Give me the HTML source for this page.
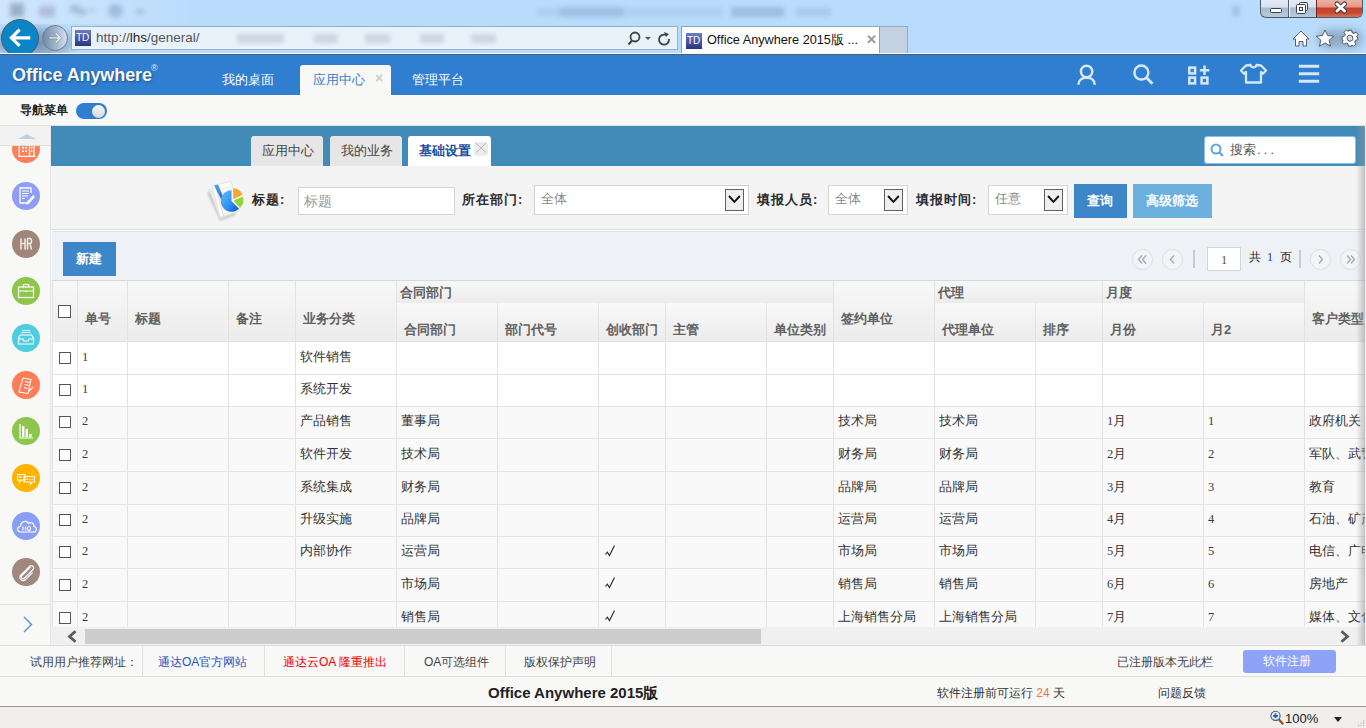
<!DOCTYPE html>
<html><head><meta charset="utf-8">
<style>
*{margin:0;padding:0;box-sizing:border-box;}
html,body{width:1366px;height:728px;overflow:hidden;font-family:"Liberation Sans",sans-serif;font-size:13px;color:#333;background:#f0edeb;position:relative;}
div,span{position:absolute;}
.t{white-space:nowrap;line-height:1;}
/* browser chrome */
#chrome{left:0;top:0;width:1366px;height:54px;background:#b9dbfc;overflow:hidden;border-bottom:1px solid #f4f8fc;}
#hdr{left:0;top:54px;width:1366px;height:41px;background:#2f7ecf;border-top:1px solid #535b64;}
#subbar{left:0;top:95px;width:1366px;height:31px;background:#f8f8f6;border-bottom:1px solid #e2e2e2;}
#side{left:0;top:126px;width:51px;height:519px;background:#f8f8f6;border-right:1px solid #e6e6e6;overflow:hidden;}
#main{left:51px;top:126px;width:1315px;height:519px;background:#f4f4f4;overflow:hidden;}
#topbar{left:0;top:0;width:1315px;height:40px;background:#428bb9;}
#filter{left:0;top:40px;width:1315px;height:64px;background:#f4f4f4;border-bottom:1px solid #dcdcdc;}
#toolbar{left:0;top:104px;width:1315px;height:50px;background:#eef1f6;border-top:1px solid #fff;border-left:1px solid #fff;box-shadow:inset 0 1px 0 #e3e3e3;}
#foot1{left:0;top:645px;width:1366px;height:32px;background:#f8f8f6;border-top:1px solid #dcdcdc;}
#foot2{left:0;top:676px;width:1366px;height:31px;background:#f8f8f6;border-top:1px solid #dcdcdc;border-bottom:1px solid #9a9a9a;}
#status{left:0;top:707px;width:1366px;height:21px;background:#f0edeb;}
.hicon{top:62px;width:26px;height:26px;}
.sico{left:12px;width:28px;height:28px;border-radius:50%;}
.ptab{top:10px;height:30px;background:#e6e6e6;border-radius:3px 3px 0 0;color:#444;font-size:13px;}
.lbl{font-weight:bold;font-size:13px;color:#2a2a2a;letter-spacing:1px;}
.inp{background:#fff;border:1px solid #d3d3d3;}
.sel{background:#fff;border:1px solid #d3d3d3;}
.dd{top:3px;width:19px;height:22px;border:1px solid #606060;background:#efefef;}
.btn{color:#fff;font-weight:bold;font-size:13px;text-align:center;}
.pc{top:247px;width:22px;height:22px;border-radius:50%;border:1px solid #d8dce2;color:#aaa;font-size:13px;text-align:center;line-height:19px;}
/* table */
#tbl{left:0;top:0;}
.th2{font-weight:bold;color:#606060;font-size:13px;}
.th{background:linear-gradient(#f7f7f7,#eaeaea);border-right:1px solid #dedede;border-bottom:1px solid #dedede;font-weight:bold;color:#555;font-size:13px;}
.vl{top:0;width:1px;background:#e2e2e2;}
.hl{left:0;height:1px;background:#e2e2e2;}
.cell{font-size:12.5px;color:#333;}
.dg{position:static;font-family:"Liberation Serif",serif;font-size:12.5px;color:#3a3a3a;}
.cb{width:12px;height:12px;border:1px solid #555;background:#fff;}
.ft{font-size:13px;color:#444;top:655px;}
.fsep{top:646px;width:1px;height:31px;background:#e0e0e0;}
</style></head>
<body>
<!-- ===== Browser chrome ===== -->
<div id="chrome">
  <div style="left:0;top:0;width:200px;height:24px;background:linear-gradient(90deg,rgba(255,255,255,.3),rgba(255,255,255,.18) 50%,rgba(255,255,255,0));"></div>
  <div style="left:8px;top:2px;width:150px;height:18px;filter:blur(2.6px);opacity:.42">
    <div style="left:2px;top:1px;width:14px;height:14px;background:#5a6a80;"></div>
    <div style="left:31px;top:4px;width:16px;height:11px;background:#8a86b8;"></div>
    <div style="left:61px;top:3px;width:12px;height:8px;border-radius:50%;background:#6a88aa;"></div>
    <div style="left:70px;top:7px;width:8px;height:6px;background:#6a88aa;"></div>
    <div style="left:80px;top:7px;width:8px;height:3px;background:#8aa0bb;"></div>
    <div style="left:100px;top:2px;width:15px;height:14px;border-radius:50%;background:#6a8db5;"></div>
    <div style="left:128px;top:7px;width:8px;height:5px;background:#7a98b8;"></div>
  </div>

  <div style="left:535px;top:6px;width:300px;height:12px;filter:blur(2.2px);">
    <div style="left:2px;top:2px;width:23px;height:8px;background:rgba(90,120,160,.12);"></div>
    <div style="left:25px;top:1px;width:64px;height:10px;background:rgba(70,100,140,.22);"></div>
    <div style="left:90px;top:2px;width:97px;height:8px;background:rgba(90,120,160,.13);"></div>
    <div style="left:196px;top:1px;width:53px;height:10px;background:rgba(70,100,140,.24);"></div>
    <div style="left:261px;top:2px;width:35px;height:8px;background:rgba(80,110,150,.16);"></div>
  </div>

  <div style="left:1232px;top:5px;width:8px;height:12px;border-radius:50%;background:rgba(90,120,160,.25);filter:blur(2px);"></div>
  <!-- window buttons -->
  <div style="left:1260px;top:-1px;width:103px;height:19px;border:1px solid #505a66;border-top:none;border-radius:0 0 6px 6px;overflow:hidden;background:linear-gradient(#e4edf7 0,#d6e2ee 8px,#a9bbd1 9px,#b9c9dc 100%);">
    <div style="left:27px;top:0;width:1px;height:19px;background:#56606c;"></div>
    <div style="left:28px;top:0;width:1px;height:19px;background:#f0f4f8;"></div>
    <div style="left:55px;top:0;width:48px;height:19px;background:linear-gradient(#f0b4a8 0,#e39888 8px,#c54128 9px,#c94a30 14px,#d9806a 100%);border-left:1px solid #6a2a1a;"></div>
    <svg style="position:absolute;left:0;top:0" width="103" height="19" viewBox="0 0 103 19">
      <rect x="9.5" y="9.5" width="11" height="4" rx="1" fill="#fff" stroke="#3a3f48" stroke-width="1"/>
      <rect x="38.5" y="3.5" width="8" height="8" rx="1" fill="#f4f4f4" stroke="#3a3f48" stroke-width="1"/>
      <rect x="35.5" y="5.5" width="9" height="9" rx="1" fill="#f8f8f8" stroke="#3a3f48" stroke-width="1"/>
      <rect x="38.5" y="8.5" width="3" height="3" fill="none" stroke="#3a3f48" stroke-width="1"/>
      <path d="M76 5 L83.5 12 M83.5 5 L76 12" stroke="#3a3f48" stroke-width="5" stroke-linecap="round"/>
      <path d="M76 5 L83.5 12 M83.5 5 L76 12" stroke="#fff" stroke-width="3" stroke-linecap="round"/>
    </svg>
  </div>
  <!-- back / forward -->
  <div style="left:-10px;top:24px;width:92px;height:34px;border-radius:50%;background:radial-gradient(ellipse at 45% 55%,rgba(50,70,100,.55),rgba(50,70,100,.25) 50%,rgba(50,70,100,0) 72%);filter:blur(2px);"></div>
  <div style="left:1px;top:19px;width:38px;height:38px;border-radius:50%;background:#0a86c8;border:1px solid #4a5a6a;"></div>
  <svg style="position:absolute;left:8px;top:27px" width="24" height="21" viewBox="0 0 24 21"><path d="M1.2 10.8 L10.5 1.5 L12.8 3.8 L7.4 9.2 H22.3 V12.4 H7.4 L12.8 17.8 L10.5 20.1 Z" fill="#fff"/></svg>
  <div style="left:42px;top:25px;width:26px;height:26px;border-radius:50%;background:linear-gradient(90deg,#7389a6,#9fb3ca 50%,#d0e2f3);border:1px solid #6e7e92;"></div>
  <svg style="position:absolute;left:47px;top:30px" width="17" height="16" viewBox="0 0 17 16"><path d="M2 6.8 H10.5 L7.6 3.9 L9.2 2.3 L14.8 7.9 L9.2 13.5 L7.6 11.9 L10.5 9 H2 Z" fill="#e2e8ef" stroke="#6e7c8c" stroke-width=".6"/></svg>
  <!-- address bar -->
  <div style="left:71px;top:26px;width:607px;height:24px;background:#e8f2fb;border:1px solid #9aaec4;">
    <div style="left:3px;top:3px;width:16px;height:16px;background:linear-gradient(#6e7bc6,#2a3582);"><div class="t" style="left:1px;top:3px;color:#fff;font-size:10px;">TD</div></div>
    <div class="t" style="left:24px;top:4px;font-size:13.5px;color:#555;">http://<span style="position:static;color:#222">lhs</span>/general/</div>
    <div style="left:165px;top:5px;width:380px;height:12px;filter:blur(2px);opacity:.16">
      <div style="left:0;top:2px;width:47px;height:9px;background:#446;"></div>
      <div style="left:77px;top:2px;width:24px;height:9px;background:#446;"></div>
      <div style="left:128px;top:2px;width:25px;height:9px;background:#446;"></div>
      <div style="left:183px;top:2px;width:24px;height:9px;background:#446;"></div>
      <div style="left:234px;top:2px;width:25px;height:9px;background:#446;"></div>
    </div>
    <svg style="position:absolute;left:555px;top:4px" width="48" height="16" viewBox="0 0 48 16"><circle cx="8" cy="6" r="4.5" stroke="#444" stroke-width="1.8" fill="none"/><path d="M5 9.5 L1.5 13.5" stroke="#444" stroke-width="2"/><path d="M18 6 L24 6 L21 9Z" fill="#555"/><path d="M39 4 A5 5 0 1 0 42 8" stroke="#444" stroke-width="1.8" fill="none"/><path d="M37 1 L42 3 L39 6Z" fill="#444"/></svg>
  </div>
  <!-- tab -->
  <div style="left:681px;top:26px;width:199px;height:28px;background:#fff;border:1px solid #8ea5be;border-bottom:none;">
    <div style="left:4px;top:6px;width:16px;height:16px;background:linear-gradient(#6e7bc6,#2a3582);"><div class="t" style="left:1px;top:3px;color:#fff;font-size:10px;">TD</div></div>
    <div class="t" style="left:25px;top:7px;font-size:12.7px;color:#111;">Office Anywhere 2015版 ...</div>
    <div class="t" style="left:184px;top:6px;font-size:13px;color:#999;font-weight:bold;">✕</div>
  </div>
  <div style="left:880px;top:26px;width:28px;height:28px;background:#c3d1e0;border:1px solid #98aac0;border-bottom:none;border-left:none;"></div>
  <!-- right icons -->
  <div style="left:1318px;top:30px;width:44px;height:18px;border-radius:9px;background:rgba(60,80,100,.35);filter:blur(4px);"></div>
  <svg style="position:absolute;left:1290px;top:28px" width="72" height="20" viewBox="0 0 72 20">
    <path d="M11 3 L19 11 H16.5 V18 H13 V13.5 H9 V18 H5.5 V11 H3 Z" fill="#fff" stroke="#4a4f58" stroke-width="0.9" stroke-linejoin="round"/>
    <path d="M35 2 L37.6 7.6 L43.8 8.2 L39.1 12.2 L40.6 18.2 L35 15 L29.4 18.2 L30.9 12.2 L26.2 8.2 L32.4 7.6Z" fill="#fff" stroke="#4a4f58" stroke-width="0.9" stroke-linejoin="round"/>
    <g transform="translate(60,10)"><path d="M-1.5 -8 H1.5 L2 -5.5 L4 -4.6 L6 -6.2 L8.1 -4.1 L6.5 -2 L7.3 0 L-0 0 Z" fill="none"/></g>
    <g transform="translate(60,10.2)" fill="#fff" stroke="#4a4f58" stroke-width="0.9" stroke-linejoin="round">
      <path d="M-1.6 -7.8 H1.6 L2.1 -5.6 L3.9 -4.8 L5.8 -6 L8 -3.8 L6.8 -1.9 L7.6 -0.1 L7.8 0 V0"/>
    </g>
    <g transform="translate(60,10.2)">
      <path d="M-1.6,-7.9 L1.6,-7.9 L2.1,-5.5 L3.9,-4.7 L5.9,-6 L8.1,-3.8 L6.8,-1.8 L7.6,0 L7.9,1.6 L5.5,2.1 L4.7,3.9 L6,5.9 L3.8,8.1 L1.8,6.8 L1.6,7.9 L-1.6,7.9 L-2.1,5.5 L-3.9,4.7 L-5.9,6 L-8.1,3.8 L-6.8,1.8 L-7.9,1.6 L-7.9,-1.6 L-5.5,-2.1 L-4.7,-3.9 L-6,-5.9 L-3.8,-8.1 L-1.8,-6.8 Z" fill="#fff" stroke="#4a4f58" stroke-width="0.9" stroke-linejoin="round"/>
      <circle r="3" fill="#c8dcf0" stroke="#4a4f58" stroke-width="0.9"/>
    </g>
  </svg>
</div>

<!-- ===== App header ===== -->
<div id="hdr">
  <div class="t" style="left:12px;top:11px;color:#f6f6f6;font-weight:bold;font-size:18px;letter-spacing:-0.1px;text-shadow:1px 1px 2px rgba(0,0,0,.35);">Office Anywhere</div>
  <div class="t" style="left:151px;top:9px;color:#e8eef6;font-size:9px;">®</div>
  <div class="t" style="left:222px;top:18px;color:#fff;font-size:13px;">我的桌面</div>
  <div style="left:300px;top:10px;width:91px;height:31px;background:#f8f8f6;border-radius:3px 3px 0 0;">
    <div class="t" style="left:13px;top:8px;color:#3a80d0;font-size:13px;">应用中心</div>
    <div class="t" style="left:75px;top:6px;color:#ccc;font-size:14px;font-weight:bold;">×</div>
  </div>
  <div class="t" style="left:412px;top:18px;color:#fff;font-size:13px;">管理平台</div>
  <svg style="position:absolute;left:1060px;top:0px" width="280" height="40" viewBox="0 0 280 40">
    <g stroke="#d4e8fa" stroke-width="2.5" fill="none">
      <circle cx="26.6" cy="16.5" r="5.7"/><path d="M18.4 29.8 C18.4 25.5 21.5 22.8 26.6 22.8 C31.7 22.8 34.8 25.5 34.8 29.8"/>
      <circle cx="81.4" cy="17.6" r="7"/><path d="M86.3 22.6 L92.5 28.8" stroke-width="2.8"/>
      <rect x="129.3" y="12.6" width="5.8" height="5.8"/><rect x="129.3" y="22.6" width="5.8" height="5.8"/><rect x="141.6" y="22.6" width="5.8" height="5.8"/><path d="M144.5 10.5 V20 M139.8 15.3 H149.3"/>
      <path d="M186 10.5 L190.5 10 C191.5 13.2 195.5 13.2 196.5 10 L201 10.5 L206 15.5 L203 18.7 L201 17 V27.5 H186 V17 L184 18.7 L181 15.5 Z" stroke-linejoin="round" stroke-width="2.3"/>
      <path d="M238.8 11.3 H259.2 M238.8 18.8 H259.2 M238.8 26.2 H259.2" stroke-width="3"/>
    </g>
  </svg>
</div>

<!-- ===== Sub bar ===== -->
<div id="subbar">
  <div class="t" style="left:20px;top:9px;font-size:12px;color:#222;font-weight:bold;">导航菜单</div>
  <div style="left:76px;top:8px;width:31px;height:16px;border-radius:8px;background:#2f7ecf;">
    <div style="left:16px;top:1.5px;width:13px;height:13px;border-radius:50%;background:linear-gradient(#fafafa,#d6d6d6);"></div>
  </div>
</div>

<!-- ===== Sidebar ===== -->
<div id="side">
  <div class="sico" style="top:9px;background:#ff7f56;"><svg width="28" height="28" viewBox="0 0 28 28"><path d="M7.2 3 V21.4 M22 3 V21.4 M17.5 3 V21.4 M6.2 21.4 H23.3" stroke="#fff" stroke-width="1.3" fill="none"/><g fill="#fff"><rect x="10" y="11.8" width="1.9" height="1.8"/><rect x="13" y="11.8" width="1.9" height="1.8"/><rect x="10" y="15.2" width="1.9" height="1.8"/><rect x="13" y="15.2" width="1.9" height="1.8"/><rect x="19" y="11.8" width="1.4" height="1.8"/><rect x="19" y="15.2" width="1.4" height="1.8"/></g></svg></div>
  <div style="left:0;top:0;width:50px;height:20px;background:#f2f2f2;border-bottom:1px solid #e0e0e0;">
    <div style="left:17.5px;top:8px;width:0;height:0;border-left:9px solid transparent;border-right:9px solid transparent;border-bottom:5px solid #c3cfdc;"></div>
  </div>
  <div class="sico" style="top:56px;background:#8e9ef7;"><svg width="28" height="28" viewBox="0 0 28 28"><path d="M16 20 V21 H8 V6 H19 V11" stroke="#fff" stroke-width="1.3" fill="none"/><path d="M10 9 H17 M10 11.5 H17 M10 14 H16 M10 16.5 H13" stroke="#fff" stroke-width="1.2"/><path d="M14.5 20.5 L21 13 L23 15 L16.5 22 L14 22.5 Z" fill="#fff"/></svg></div>
  <div class="sico" style="top:104px;background:#a08679;"><svg width="28" height="28" viewBox="0 0 28 28"><path d="M9 8.5 V19.5 M9 13.5 H13 M13 8.5 V19.5 M15.5 19.5 V8.5 H18 C20 8.5 20 13.5 18 13.5 H15.5 M18 13.5 L19.5 19.5" stroke="#f2ece6" stroke-width="1.5" fill="none"/></svg></div>
  <div class="sico" style="top:151px;background:#8ec64d;"><svg width="28" height="28" viewBox="0 0 28 28"><rect x="6.5" y="10" width="15" height="10.5" stroke="#fff" stroke-width="1.2" fill="none"/><path d="M11.5 10 V7.5 H16.5 V10 M6.5 14 H21.5 M14 13.5 V15" stroke="#fff" stroke-width="1.2" fill="none"/></svg></div>
  <div class="sico" style="top:198px;background:#4ecde0;"><svg width="28" height="28" viewBox="0 0 28 28"><path d="M6.5 14 L8.5 11 H19.5 L21.5 14 V20 H6.5Z M6.5 15 H11 L12 17 H16 L17 15 H21.5 M9.5 8.5 H18.5 M10 6.5 H18" stroke="#fff" stroke-width="1.2" fill="none"/></svg></div>
  <div class="sico" style="top:245px;background:#fe7c56;"><svg width="28" height="28" viewBox="0 0 28 28"><path d="M11 7 L19 8.5 L16.5 20 M13 10.5 L17.5 11.5 M12.5 13.5 L17 14.5 M12 16.5 L15.5 17.5" stroke="#fff" stroke-width="1.1" fill="none"/><path d="M11 7 L8 17 L7 21 L16 22.5 L17 20 M21 16 L17 20" stroke="#fff" stroke-width="1.1" fill="none"/></svg></div>
  <div class="sico" style="top:291px;background:#8ec64d;"><svg width="28" height="28" viewBox="0 0 28 28"><path d="M8 7 V21 H21" stroke="#fff" stroke-width="1.2" fill="none"/><rect x="10" y="9" width="2.4" height="11" fill="#fff"/><rect x="13.6" y="12" width="2.4" height="8" fill="#fff"/><rect x="17.2" y="17" width="2.4" height="3" fill="#fff"/></svg></div>
  <div class="sico" style="top:338px;background:#ffb300;"><svg width="28" height="28" viewBox="0 0 28 28"><path d="M5.5 10.5 H13 V16 H9 L7.5 18 V16 H5.5 Z M12 12.5 H22.5 V18 H20 L18.5 20 V18 H12 Z" stroke="#fff" stroke-width="1.1" fill="none"/><path d="M14.5 15.3 H15.8 M17 15.3 H18.3 M19.5 15.3 H20.8 M7 13 H9.5" stroke="#fff" stroke-width="1.3"/></svg></div>
  <div class="sico" style="top:386px;background:#8a9ef8;"><svg width="28" height="28" viewBox="0 0 28 28"><path d="M8.5 20 C4.5 20 4.5 14.5 8.5 14.5 C8.5 9 15 8 16.5 11.5 C19 9.5 22.5 11 22 14.5 C25.5 15 25 20 21.5 20 Z" stroke="#fff" stroke-width="1.2" fill="none"/><path d="M11 14.5 V18.5 M13.5 14.5 V18.5" stroke="#fff" stroke-width="1.1"/><ellipse cx="17" cy="16.5" rx="1.6" ry="2" stroke="#fff" stroke-width="1.1" fill="none"/></svg></div>
  <div class="sico" style="top:432px;background:#a1887f;"><svg width="28" height="28" viewBox="0 0 28 28"><path d="M18.5 9 L10 17.5 C8 19.5 10.5 22 12.5 20 L21 11.5 C23 9.5 20 6 17.5 8.5 L9 17 C6 20 10 25 13.5 21.5 L20.5 14.5" stroke="#fff" stroke-width="1.1" fill="none"/></svg></div>
  <div style="left:0;top:478px;width:50px;height:1px;background:#e3e3e3;"></div>
  <svg style="position:absolute;left:22px;top:490px" width="12" height="17" viewBox="0 0 12 17"><path d="M2 1 L9.5 8.5 L2 16" stroke="#4a95e0" stroke-width="1.4" fill="none"/></svg>
</div>

<!-- ===== Main ===== -->
<div id="main">
  <div id="topbar">
    <div class="ptab" style="left:200px;width:72px;"><div class="t" style="left:11px;top:8px;">应用中心</div></div>
    <div class="ptab" style="left:279px;width:72px;"><div class="t" style="left:11px;top:8px;">我的业务</div></div>
    <div class="ptab" style="left:357px;width:83px;background:#fff;"><div class="t" style="left:11px;top:8px;color:#1a50a0;font-weight:bold;">基础设置</div>
      <div style="left:66px;top:6px;width:14px;height:14px;background:#ececec;border-radius:3px;"><svg width="14" height="14" viewBox="0 0 14 14"><path d="M2 1.2 L12 10.5 M12 1.2 L2 10.5" stroke="#b8b8b8" stroke-width="1"/></svg></div></div>
    <div style="left:1153px;top:10px;width:152px;height:28px;background:#fff;border-radius:3px;border:1px solid #8cc0e4;">
      <svg style="position:absolute;left:5px;top:6px" width="15" height="15" viewBox="0 0 15 15"><circle cx="6" cy="6" r="4.5" stroke="#58a8e4" stroke-width="2" fill="none"/><path d="M9.5 9.5 L13 13" stroke="#58a8e4" stroke-width="2.2"/></svg>
      <div class="t" style="left:25px;top:6px;color:#555;font-size:13px;">搜索<span style="position:static;letter-spacing:3.2px;margin-left:1px">...</span></div>
    </div>
  </div>
  <div id="filter">
    <svg style="position:absolute;left:149px;top:9px" width="50" height="50" viewBox="0 0 50 50">
      <defs>
        <linearGradient id="pb" x1="0" y1="0" x2="1" y2="1"><stop offset="0" stop-color="#5ec0fa"/><stop offset=".6" stop-color="#2e8ef0"/><stop offset="1" stop-color="#0e52c8"/></linearGradient>
        <linearGradient id="rb" x1="0" y1="0" x2="1" y2="1"><stop offset="0" stop-color="#5aa8f8"/><stop offset="1" stop-color="#1a66d8"/></linearGradient>
        <filter id="bl" x="-20%" y="-20%" width="140%" height="140%"><feGaussianBlur stdDeviation="1.2"/></filter>
      </defs>
      <path d="M7 18 L22 11 L36 40 L20 46 Z" fill="#9a9a9a" opacity=".45" filter="url(#bl)"/>
      <path d="M9 15 L26 8 L37 37 L20 44 Z" fill="#ececec" stroke="#cfcfcf" stroke-width=".6"/>
      <path d="M12 11 L31 6 L39 36 L20 42 Z" fill="#fbfbfb" stroke="#d8d8d8" stroke-width=".6"/>
      <g stroke="#dedede" stroke-width=".6"><path d="M18 15 L32 11 M19 19 L33 15 M20 23 L34 19 M21 27 L35 23 M22 31 L36 27 M23 35 L37 31 M24 39 L37.5 35"/></g>
      <path d="M16 11.5 L23.5 41.5" stroke="#f2c9b8" stroke-width=".7"/>
      <path d="M14 10.5 L18 9.5 L23 21.5 L21 24.5 L19.5 21 Z" fill="url(#rb)"/>
      <path d="M31.5 26 L31.5 15.2 A10.8 10.8 0 1 0 39 33.8 Z" fill="url(#pb)"/>
      <path d="M33.2 24 L33.2 13.2 A10.6 10.6 0 0 1 42.6 19.8 Z" fill="#f6a82a"/>
      <path d="M33.6 25.6 L42.8 21.8 A10.6 10.6 0 0 1 40 32.8 Z" fill="#8fd632"/>
    </svg>
  </div>
  <div class="t lbl" style="left:201px;top:67px;">标题:</div>
  <div class="inp" style="left:247px;top:61px;width:157px;height:28px;"><div class="t" style="left:5px;top:6px;color:#999;font-size:14px;">标题</div></div>
  <div class="t lbl" style="left:411px;top:67px;">所在部门:</div>
  <div class="sel" style="left:483px;top:59px;width:215px;height:30px;"><div class="t" style="left:6px;top:6px;color:#888;font-size:13px;">全体</div><div class="dd" style="left:190px;"><svg width="17" height="20" viewBox="0 0 17 20"><path d="M3 6 L8.4 11.8 L13.8 6" stroke="#111" stroke-width="1.9" fill="none"/></svg></div></div>
  <div class="t lbl" style="left:706px;top:67px;">填报人员:</div>
  <div class="sel" style="left:777px;top:59px;width:80px;height:30px;"><div class="t" style="left:6px;top:6px;color:#888;font-size:13px;">全体</div><div class="dd" style="left:55px;"><svg width="17" height="20" viewBox="0 0 17 20"><path d="M3 6 L8.4 11.8 L13.8 6" stroke="#111" stroke-width="1.9" fill="none"/></svg></div></div>
  <div class="t lbl" style="left:865px;top:67px;">填报时间:</div>
  <div class="sel" style="left:937px;top:59px;width:80px;height:30px;"><div class="t" style="left:6px;top:6px;color:#888;font-size:13px;">任意</div><div class="dd" style="left:55px;"><svg width="17" height="20" viewBox="0 0 17 20"><path d="M3 6 L8.4 11.8 L13.8 6" stroke="#111" stroke-width="1.9" fill="none"/></svg></div></div>
  <div class="btn" style="left:1023px;top:58px;width:53px;height:34px;background:#3d87c8;"><div class="t" style="left:13px;top:10px;">查询</div></div>
  <div class="btn" style="left:1082px;top:58px;width:79px;height:34px;background:#6cb0e0;"><div class="t" style="left:13px;top:10px;">高级筛选</div></div>

  <div id="toolbar"></div>
  <div class="btn" style="left:12px;top:116px;width:53px;height:34px;background:#3d87c8;"><div class="t" style="left:13px;top:10px;">新建</div></div>
  <!-- pagination -->
<div style="left:1081px;top:123px;width:21px;height:21px;border-radius:50%;border:1px solid #dcdfe3;background:#f3f4f6;"><svg style="position:absolute;left:0;top:0" width="19" height="19" viewBox="0 0 19 19"><path d="M9 5.5 L5.5 9.5 L9 13.5 M13 5.5 L9.5 9.5 L13 13.5" stroke="#a3adbb" stroke-width="1.4" fill="none"/></svg></div>
<div style="left:1111px;top:123px;width:21px;height:21px;border-radius:50%;border:1px solid #dcdfe3;background:#f3f4f6;"><svg style="position:absolute;left:0;top:0" width="19" height="19" viewBox="0 0 19 19"><path d="M11 5.5 L7.5 9.5 L11 13.5" stroke="#a3adbb" stroke-width="1.4" fill="none"/></svg></div>
<div style="left:1142px;top:124px;width:2px;height:18px;background:#c3ccd6;"></div>
<div style="left:1156px;top:121px;width:34px;height:24px;background:#fff;border:1px solid #d5d5d5;"><div class="t" style="left:13px;top:6px;color:#555;font-size:12.5px;font-family:'Liberation Serif',serif;">1</div></div>
<div class="t" style="left:1198px;top:125px;font-size:12px;color:#222;">共</div>
<div class="t" style="left:1216px;top:125px;font-size:12px;color:#1a3a7a;font-family:'Liberation Serif',serif;">1</div>
<div class="t" style="left:1229px;top:125px;font-size:12px;color:#222;">页</div>
<div style="left:1248px;top:124px;width:2px;height:18px;background:#c3ccd6;"></div>
<div style="left:1259px;top:123px;width:21px;height:21px;border-radius:50%;border:1px solid #dcdfe3;background:#f3f4f6;"><svg style="position:absolute;left:0;top:0" width="19" height="19" viewBox="0 0 19 19"><path d="M8 5.5 L11.5 9.5 L8 13.5" stroke="#a3adbb" stroke-width="1.4" fill="none"/></svg></div>
<div style="left:1289px;top:123px;width:21px;height:21px;border-radius:50%;border:1px solid #dcdfe3;background:#f3f4f6;"><svg style="position:absolute;left:0;top:0" width="19" height="19" viewBox="0 0 19 19"><path d="M6 5.5 L9.5 9.5 L6 13.5 M10 5.5 L13.5 9.5 L10 13.5" stroke="#a3adbb" stroke-width="1.4" fill="none"/></svg></div>
  <!-- table -->
  <div id="tbl">
<div style="left:1px;top:154px;width:25px;height:61px;background:linear-gradient(#f8f8f8,#ececec);"></div>
<div style="left:26px;top:154px;width:50px;height:61px;background:linear-gradient(#f8f8f8,#ececec);"></div>
<div class="t th2" style="left:34px;top:186px;">单号</div>
<div style="left:76px;top:154px;width:101px;height:61px;background:linear-gradient(#f8f8f8,#ececec);"></div>
<div class="t th2" style="left:84px;top:186px;">标题</div>
<div style="left:177px;top:154px;width:67px;height:61px;background:linear-gradient(#f8f8f8,#ececec);"></div>
<div class="t th2" style="left:185px;top:186px;">备注</div>
<div style="left:244px;top:154px;width:101px;height:61px;background:linear-gradient(#f8f8f8,#ececec);"></div>
<div class="t th2" style="left:252px;top:186px;">业务分类</div>
<div style="left:782px;top:154px;width:101px;height:61px;background:linear-gradient(#f8f8f8,#ececec);"></div>
<div class="t th2" style="left:790px;top:186px;">签约单位</div>
<div style="left:1253px;top:154px;width:116px;height:61px;background:linear-gradient(#f8f8f8,#ececec);"></div>
<div class="t th2" style="left:1261px;top:186px;">客户类型</div>
<div style="left:345px;top:154px;width:437px;height:23px;background:linear-gradient(#f8f8f8,#ececec);"></div>
<div class="t th2" style="left:349px;top:160px;">合同部门</div>
<div style="left:883px;top:154px;width:168px;height:23px;background:linear-gradient(#f8f8f8,#ececec);"></div>
<div class="t th2" style="left:887px;top:160px;">代理</div>
<div style="left:1051px;top:154px;width:202px;height:23px;background:linear-gradient(#f8f8f8,#ececec);"></div>
<div class="t th2" style="left:1055px;top:160px;">月度</div>
<div style="left:345px;top:177px;width:101px;height:38px;background:linear-gradient(#f8f8f8,#ececec);"></div>
<div class="t th2" style="left:353px;top:197px;">合同部门</div>
<div style="left:446px;top:177px;width:101px;height:38px;background:linear-gradient(#f8f8f8,#ececec);"></div>
<div class="t th2" style="left:454px;top:197px;">部门代号</div>
<div style="left:547px;top:177px;width:67px;height:38px;background:linear-gradient(#f8f8f8,#ececec);"></div>
<div class="t th2" style="left:555px;top:197px;">创收部门</div>
<div style="left:614px;top:177px;width:101px;height:38px;background:linear-gradient(#f8f8f8,#ececec);"></div>
<div class="t th2" style="left:622px;top:197px;">主管</div>
<div style="left:715px;top:177px;width:67px;height:38px;background:linear-gradient(#f8f8f8,#ececec);"></div>
<div class="t th2" style="left:723px;top:197px;">单位类别</div>
<div style="left:883px;top:177px;width:101px;height:38px;background:linear-gradient(#f8f8f8,#ececec);"></div>
<div class="t th2" style="left:891px;top:197px;">代理单位</div>
<div style="left:984px;top:177px;width:67px;height:38px;background:linear-gradient(#f8f8f8,#ececec);"></div>
<div class="t th2" style="left:992px;top:197px;">排序</div>
<div style="left:1051px;top:177px;width:101px;height:38px;background:linear-gradient(#f8f8f8,#ececec);"></div>
<div class="t th2" style="left:1059px;top:197px;">月份</div>
<div style="left:1152px;top:177px;width:101px;height:38px;background:linear-gradient(#f8f8f8,#ececec);"></div>
<div class="t th2" style="left:1160px;top:197px;">月2</div>
<div class="cb" style="left:7px;top:179px;width:13px;height:13px;"></div>
<div style="left:1px;top:215px;width:1320px;height:33px;background:#fff;"></div>
<div class="cb" style="left:8px;top:226px;"></div>
<div class="t cell" style="left:31px;top:225px;"><span class="dg">1</span></div>
<div class="t cell" style="left:249px;top:225px;">软件销售</div>
<div style="left:1px;top:248px;width:1320px;height:32px;background:#fff;"></div>
<div class="cb" style="left:8px;top:258px;"></div>
<div class="t cell" style="left:31px;top:257px;"><span class="dg">1</span></div>
<div class="t cell" style="left:249px;top:257px;">系统开发</div>
<div style="left:1px;top:280px;width:1320px;height:32px;background:#f9f9f9;"></div>
<div class="cb" style="left:8px;top:290px;"></div>
<div class="t cell" style="left:31px;top:289px;"><span class="dg">2</span></div>
<div class="t cell" style="left:249px;top:289px;">产品销售</div>
<div class="t cell" style="left:350px;top:289px;">董事局</div>
<div class="t cell" style="left:787px;top:289px;">技术局</div>
<div class="t cell" style="left:888px;top:289px;">技术局</div>
<div class="t cell" style="left:1056px;top:289px;"><span class="dg">1</span>月</div>
<div class="t cell" style="left:1157px;top:289px;"><span class="dg">1</span></div>
<div class="t cell" style="left:1258px;top:289px;">政府机关</div>
<div style="left:1px;top:312px;width:1320px;height:33px;background:#f9f9f9;"></div>
<div class="cb" style="left:8px;top:323px;"></div>
<div class="t cell" style="left:31px;top:322px;"><span class="dg">2</span></div>
<div class="t cell" style="left:249px;top:322px;">软件开发</div>
<div class="t cell" style="left:350px;top:322px;">技术局</div>
<div class="t cell" style="left:787px;top:322px;">财务局</div>
<div class="t cell" style="left:888px;top:322px;">财务局</div>
<div class="t cell" style="left:1056px;top:322px;"><span class="dg">2</span>月</div>
<div class="t cell" style="left:1157px;top:322px;"><span class="dg">2</span></div>
<div class="t cell" style="left:1258px;top:322px;">军队、武警</div>
<div style="left:1px;top:345px;width:1320px;height:33px;background:#f9f9f9;"></div>
<div class="cb" style="left:8px;top:356px;"></div>
<div class="t cell" style="left:31px;top:355px;"><span class="dg">2</span></div>
<div class="t cell" style="left:249px;top:355px;">系统集成</div>
<div class="t cell" style="left:350px;top:355px;">财务局</div>
<div class="t cell" style="left:787px;top:355px;">品牌局</div>
<div class="t cell" style="left:888px;top:355px;">品牌局</div>
<div class="t cell" style="left:1056px;top:355px;"><span class="dg">3</span>月</div>
<div class="t cell" style="left:1157px;top:355px;"><span class="dg">3</span></div>
<div class="t cell" style="left:1258px;top:355px;">教育</div>
<div style="left:1px;top:378px;width:1320px;height:32px;background:#f9f9f9;"></div>
<div class="cb" style="left:8px;top:388px;"></div>
<div class="t cell" style="left:31px;top:387px;"><span class="dg">2</span></div>
<div class="t cell" style="left:249px;top:387px;">升级实施</div>
<div class="t cell" style="left:350px;top:387px;">品牌局</div>
<div class="t cell" style="left:787px;top:387px;">运营局</div>
<div class="t cell" style="left:888px;top:387px;">运营局</div>
<div class="t cell" style="left:1056px;top:387px;"><span class="dg">4</span>月</div>
<div class="t cell" style="left:1157px;top:387px;"><span class="dg">4</span></div>
<div class="t cell" style="left:1258px;top:387px;">石油、矿产</div>
<div style="left:1px;top:410px;width:1320px;height:32px;background:#f9f9f9;"></div>
<div class="cb" style="left:8px;top:420px;"></div>
<div class="t cell" style="left:31px;top:419px;"><span class="dg">2</span></div>
<div class="t cell" style="left:249px;top:419px;">内部协作</div>
<div class="t cell" style="left:350px;top:419px;">运营局</div>
<svg style="position:absolute;left:554px;top:419px" width="11" height="13" viewBox="0 0 11 13"><path d="M0.4 9.5 L2.4 7.2 L4.5 10.6 L9.5 0.4" stroke="#222" stroke-width="1.05" fill="none"/></svg>
<div class="t cell" style="left:787px;top:419px;">市场局</div>
<div class="t cell" style="left:888px;top:419px;">市场局</div>
<div class="t cell" style="left:1056px;top:419px;"><span class="dg">5</span>月</div>
<div class="t cell" style="left:1157px;top:419px;"><span class="dg">5</span></div>
<div class="t cell" style="left:1258px;top:419px;">电信、广电</div>
<div style="left:1px;top:442px;width:1320px;height:33px;background:#f9f9f9;"></div>
<div class="cb" style="left:8px;top:453px;"></div>
<div class="t cell" style="left:31px;top:452px;"><span class="dg">2</span></div>
<div class="t cell" style="left:350px;top:452px;">市场局</div>
<svg style="position:absolute;left:554px;top:451px" width="11" height="13" viewBox="0 0 11 13"><path d="M0.4 9.5 L2.4 7.2 L4.5 10.6 L9.5 0.4" stroke="#222" stroke-width="1.05" fill="none"/></svg>
<div class="t cell" style="left:787px;top:452px;">销售局</div>
<div class="t cell" style="left:888px;top:452px;">销售局</div>
<div class="t cell" style="left:1056px;top:452px;"><span class="dg">6</span>月</div>
<div class="t cell" style="left:1157px;top:452px;"><span class="dg">6</span></div>
<div class="t cell" style="left:1258px;top:452px;">房地产</div>
<div style="left:1px;top:475px;width:1320px;height:33px;background:#f9f9f9;"></div>
<div class="cb" style="left:8px;top:486px;"></div>
<div class="t cell" style="left:31px;top:485px;"><span class="dg">2</span></div>
<div class="t cell" style="left:350px;top:485px;">销售局</div>
<svg style="position:absolute;left:554px;top:484px" width="11" height="13" viewBox="0 0 11 13"><path d="M0.4 9.5 L2.4 7.2 L4.5 10.6 L9.5 0.4" stroke="#222" stroke-width="1.05" fill="none"/></svg>
<div class="t cell" style="left:787px;top:485px;">上海销售分局</div>
<div class="t cell" style="left:888px;top:485px;">上海销售分局</div>
<div class="t cell" style="left:1056px;top:485px;"><span class="dg">7</span>月</div>
<div class="t cell" style="left:1157px;top:485px;"><span class="dg">7</span></div>
<div class="t cell" style="left:1258px;top:485px;">媒体、文化</div>
<div style="left:1px;top:154px;width:1px;height:347px;background:#e3e3e3;"></div>
<div style="left:26px;top:154px;width:1px;height:347px;background:#e3e3e3;"></div>
<div style="left:76px;top:154px;width:1px;height:347px;background:#e3e3e3;"></div>
<div style="left:177px;top:154px;width:1px;height:347px;background:#e3e3e3;"></div>
<div style="left:244px;top:154px;width:1px;height:347px;background:#e3e3e3;"></div>
<div style="left:345px;top:154px;width:1px;height:347px;background:#e3e3e3;"></div>
<div style="left:446px;top:177px;width:1px;height:324px;background:#e3e3e3;"></div>
<div style="left:547px;top:177px;width:1px;height:324px;background:#e3e3e3;"></div>
<div style="left:614px;top:177px;width:1px;height:324px;background:#e3e3e3;"></div>
<div style="left:715px;top:177px;width:1px;height:324px;background:#e3e3e3;"></div>
<div style="left:782px;top:154px;width:1px;height:347px;background:#e3e3e3;"></div>
<div style="left:883px;top:154px;width:1px;height:347px;background:#e3e3e3;"></div>
<div style="left:984px;top:177px;width:1px;height:324px;background:#e3e3e3;"></div>
<div style="left:1051px;top:154px;width:1px;height:347px;background:#e3e3e3;"></div>
<div style="left:1152px;top:177px;width:1px;height:324px;background:#e3e3e3;"></div>
<div style="left:1253px;top:154px;width:1px;height:347px;background:#e3e3e3;"></div>
<div style="left:1px;top:154px;width:1400px;height:1px;background:#d8d8d8;"></div>
<div style="left:1px;top:215px;width:1400px;height:1px;background:#e3e3e3;"></div>
<div style="left:1px;top:248px;width:1400px;height:1px;background:#e3e3e3;"></div>
<div style="left:1px;top:280px;width:1400px;height:1px;background:#e3e3e3;"></div>
<div style="left:1px;top:312px;width:1400px;height:1px;background:#e3e3e3;"></div>
<div style="left:1px;top:345px;width:1400px;height:1px;background:#e3e3e3;"></div>
<div style="left:1px;top:378px;width:1400px;height:1px;background:#e3e3e3;"></div>
<div style="left:1px;top:410px;width:1400px;height:1px;background:#e3e3e3;"></div>
<div style="left:1px;top:442px;width:1400px;height:1px;background:#e3e3e3;"></div>
<div style="left:1px;top:475px;width:1400px;height:1px;background:#e3e3e3;"></div>
<div style="left:1px;top:508px;width:1400px;height:1px;background:#e3e3e3;"></div>
</div><!--/tbl--><!--/tbl--><!--/tbl--><!--/tbl--><!--/tbl--><!--/tbl--><!--/tbl--><!--/tbl--><!--/tbl--><!--/tbl-->
  <!-- hscroll -->
  <div style="left:0;top:501px;width:1315px;height:18px;background:#f0f0f0;">
    <div style="left:34px;top:2px;width:676px;height:15px;background:#cdcdcd;"></div>
    <svg style="position:absolute;left:15px;top:3px" width="12" height="13" viewBox="0 0 12 13"><path d="M9.5 1.2 L3.5 6.5 L9.5 11.8" stroke="#5a5a5a" stroke-width="2.8" fill="none"/></svg>
    <svg style="position:absolute;left:1288px;top:3px" width="12" height="13" viewBox="0 0 12 13"><path d="M2.5 1.2 L8.5 6.5 L2.5 11.8" stroke="#5a5a5a" stroke-width="2.8" fill="none"/></svg>
  </div>
  <div style="left:1305px;top:0;width:9px;height:519px;background:linear-gradient(90deg,rgba(150,150,150,0),rgba(150,150,150,.55));"></div><div style="left:1314px;top:0;width:1px;height:519px;background:#ececec;"></div>
</div>

<!-- ===== Footer ===== -->
<div id="foot1">
  <div class="t" style="left:30px;top:10px;font-size:12px;color:#444;">试用用户推荐网址：</div>
  <div style="left:142px;top:0;width:1px;height:31px;background:#e0e0e0;"></div>
  <div class="t" style="left:158px;top:10px;font-size:12px;color:#2a52be;">通达OA官方网站</div>
  <div style="left:264px;top:0;width:1px;height:31px;background:#e0e0e0;"></div>
  <div class="t" style="left:283px;top:10px;font-size:12px;color:#e00;">通达云OA 隆重推出</div>
  <div style="left:404px;top:0;width:1px;height:31px;background:#e0e0e0;"></div>
  <div class="t" style="left:424px;top:10px;font-size:12px;color:#444;">OA可选组件</div>
  <div style="left:505px;top:0;width:1px;height:31px;background:#e0e0e0;"></div>
  <div class="t" style="left:524px;top:10px;font-size:12px;color:#444;">版权保护声明</div>
  <div style="left:611px;top:0;width:1px;height:31px;background:#e0e0e0;"></div>
  <div class="t" style="left:1117px;top:10px;font-size:12px;color:#444;">已注册版本无此栏</div>
  <div style="left:1243px;top:4px;width:93px;height:23px;background:#8ea3f8;border-radius:3px;"><div class="t" style="left:20px;top:5px;color:#fff;font-size:12px;">软件注册</div></div>
</div>
<div id="foot2">
  <div class="t" style="left:488px;top:8px;font-size:15px;font-weight:bold;color:#222;">Office Anywhere 2015版</div>
  <div class="t" style="left:937px;top:10px;font-size:12px;color:#333;">软件注册前可运行 <span style="position:static;color:#f07050">24</span> 天</div>
  <div class="t" style="left:1158px;top:10px;font-size:12px;color:#333;">问题反馈</div>
</div>
<div id="status">
  <svg style="position:absolute;left:1270px;top:3px" width="14" height="15" viewBox="0 0 14 15"><path d="M8.5 9 L12.5 13.5" stroke="#8a5a2a" stroke-width="2.4" stroke-linecap="round"/><circle cx="5.5" cy="5.8" r="4.6" fill="#e8f2ff" stroke="#4a5a6a" stroke-width="1.1"/><path d="M3 5.8 H8 M5.5 3.3 V8.3" stroke="#1a5fd0" stroke-width="1.8"/></svg>
  <div class="t" style="left:1285px;top:5px;font-size:13px;color:#222;">100%</div>
  <div style="left:1334px;top:10px;width:0;height:0;border-left:4.5px solid transparent;border-right:4.5px solid transparent;border-top:5px solid #222;"></div>
  <svg style="position:absolute;left:1356px;top:12px" width="10" height="9" viewBox="0 0 10 9"><g fill="#b8b4b0"><rect x="7" y="1" width="1.2" height="1.2"/><rect x="4.5" y="3.5" width="1.2" height="1.2"/><rect x="7" y="3.5" width="1.2" height="1.2"/><rect x="2" y="6" width="1.2" height="1.2"/><rect x="4.5" y="6" width="1.2" height="1.2"/><rect x="7" y="6" width="1.2" height="1.2"/></g></svg>
</div>
</body></html>
